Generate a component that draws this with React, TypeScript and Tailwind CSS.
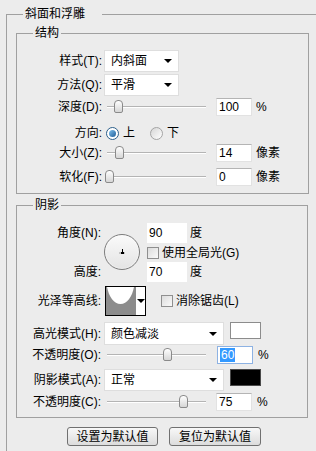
import type { ReactNode } from 'react';

// Photoshop 图层样式 - 斜面和浮雕 面板

function GroupBox({ title, className, titleClass, children }: { title: string; className: string; titleClass?: string; children: ReactNode }) {
  return (
    <div className={`relative border border-[#a0a0a0] ${className}`}>
      <span className={`absolute -top-[9px] bg-[#ececec] text-[12px] leading-[16px] ${titleClass ?? 'left-[16px] px-[2px]'}`}>{title}</span>
      {children}
    </div>
  );
}

function Arrow() {
  return <span className="h-0 w-0 border-l-[4px] border-r-[4px] border-t-[4px] border-l-transparent border-r-transparent border-t-black" />;
}

function Dropdown({ value, width }: { value: string; width: string }) {
  return (
    <div className={`flex h-[22px] items-center justify-between border border-[#dedede] bg-white pl-[6px] pr-[6px] ${width}`}>
      <span>{value}</span>
      <Arrow />
    </div>
  );
}

function NumInput({ value, selected }: { value: string; selected?: boolean }) {
  return (
    <div
      className={`flex h-[18px] w-[36px] items-center border bg-white pl-[2px] text-[12px] leading-[14px] ${
        selected ? 'border-[#8db2e3]' : 'border-[#e2e2e2] border-t-[#b4b4b4]'
      }`}
    >
      {selected ? <span className="bg-[#3399ff] px-[1px] text-white">{value}</span> : value}
    </div>
  );
}

function Slider({ thumb }: { thumb: number }) {
  // thumb: 滑块中心 x（相对于滑杆容器）
  return (
    <div className="relative h-[14px] w-[102px]">
      <div className="absolute left-[3px] right-0 top-[6px] h-[2px] border-b border-b-white bg-[#b4b4b4]" />
      <div
        className="absolute top-0 h-[13px] w-[9px] rounded-t-[4px] rounded-b-[2px] border border-[#8a8a8a] bg-gradient-to-b from-white to-[#d6d6d6]"
        style={{ left: `${thumb - 4}px` }}
      />
    </div>
  );
}

function Checkbox() {
  return <span className="block h-[12px] w-[12px] border border-[#8f8f8f] bg-gradient-to-br from-[#dcdcdc] to-[#fafafa]" />;
}

function Radio({ checked }: { checked?: boolean }) {
  return checked ? (
    <span className="flex h-[13px] w-[13px] items-center justify-center rounded-full border border-[#2c5f8a] bg-white">
      <span className="h-[7px] w-[7px] rounded-full bg-gradient-to-br from-[#7fc0ee] to-[#1f5f98]" />
    </span>
  ) : (
    <span className="block h-[13px] w-[13px] rounded-full border border-[#a4a4a4] bg-gradient-to-br from-[#d6d6d6] to-white" />
  );
}

function Label({ children, w = 'w-[85px]' }: { children: ReactNode; w?: string }) {
  return <div className={`${w} shrink-0 text-right`}>{children}</div>;
}

function SliderRow({ label, thumb, value, unit, className, selected }: { label: string; thumb: number; value: string; unit: string; className?: string; selected?: boolean }) {
  return (
    <div className={`flex h-[20px] items-center ${className ?? ''}`}>
      <Label>{label}</Label>
      <div className="ml-[2px]">
        <Slider thumb={thumb} />
      </div>
      <div className="ml-[10px]">
        <NumInput value={value} selected={selected} />
      </div>
      <span className="ml-[4px]">{unit}</span>
    </div>
  );
}

export default function App() {
  return (
    <div className="h-[451px] w-[316px] overflow-hidden bg-[#ececec] font-['Liberation_Sans','Noto_Sans_CJK_SC',sans-serif] text-[12px] leading-[16px] text-black">
      <div className="pl-[6px] pt-[14px]">
        <div className="relative h-[450px] w-[330px] border-l border-t border-[#a0a0a0]">
          <span className="absolute -top-[9px] left-[16px] bg-[#ececec] pl-[2px] pr-[17px] text-[12px] leading-[16px]">斜面和浮雕</span>

          <div className="pl-[9px] pt-[18px]">
            {/* 结构 */}
            <GroupBox title="结构" className="h-[161px] w-[293px]">
              <div className="mt-[17px] flex h-[20px] items-center">
                <Label>样式(T):</Label>
                <div className="ml-[2px]">
                  <Dropdown value="内斜面" width="w-[75px]" />
                </div>
              </div>
              <div className="mt-[4px] flex h-[20px] items-center">
                <Label>方法(Q):</Label>
                <div className="ml-[2px]">
                  <Dropdown value="平滑" width="w-[75px]" />
                </div>
              </div>
              <SliderRow label="深度(D):" thumb={14} value="100" unit="%" className="mt-[2px]" />
              <div className="mt-[6px] flex h-[20px] items-center">
                <Label>方向:</Label>
                <div className="ml-[4px] flex items-center">
                  <Radio checked />
                  <span className="ml-[4px]">上</span>
                  <span className="ml-[15px]">
                    <Radio />
                  </span>
                  <span className="ml-[4px]">下</span>
                </div>
              </div>
              <SliderRow label="大小(Z):" thumb={15} value="14" unit="像素" />
              <SliderRow label="软化(F):" thumb={5} value="0" unit="像素" className="mt-[4px]" />
            </GroupBox>

            {/* 阴影 */}
            <GroupBox title="阴影" className="mt-[11px] h-[213px] w-[292px]">
              <div className="mt-[17px] flex">
                <div className="flex w-[84px] shrink-0 flex-col text-right">
                  <div className="flex h-[20px] items-center justify-end">角度(N):</div>
                  <div className="mt-[19px] flex h-[20px] items-center justify-end">高度:</div>
                </div>
                <div className="ml-[3px] mt-[11px] h-[36px] w-[36px] rounded-full border border-[#7c7c7c] bg-gradient-to-b from-[#fafafa] to-[#e4e4e4] shadow-[inset_0_0_2px_#fff]">
                  <svg width="34" height="34" viewBox="0 0 34 34">
                    <line x1="14" y1="18" x2="20" y2="18" stroke="#9a9a9a" strokeWidth="1" />
                    <line x1="17.5" y1="14" x2="17.5" y2="17" stroke="#000" strokeWidth="1" />
                    <rect x="16" y="17" width="3" height="2" fill="#000" />
                  </svg>
                </div>
                <div className="ml-[7px] flex flex-col">
                  <div className="flex h-[20px] items-center">
                    <div className="flex h-[20px] w-[40px] items-center bg-white pl-[2px]">90</div>
                    <span className="ml-[3px]">度</span>
                  </div>
                  <div className="flex h-[19px] items-center">
                    <Checkbox />
                    <span className="ml-[3px]">使用全局光(G)</span>
                  </div>
                  <div className="flex h-[20px] items-center">
                    <div className="flex h-[20px] w-[40px] items-center bg-white pl-[2px]">70</div>
                    <span className="ml-[3px]">度</span>
                  </div>
                </div>
              </div>

              <div className="mt-[4px] flex h-[30px] items-center">
                <Label w="w-[84px]">光泽等高线:</Label>
                <div className="ml-[4px] flex h-[30px] w-[41px] border border-black bg-white">
                  <svg width="29" height="28" viewBox="0 0 29 28" className="shrink-0">
                    <rect x="0" y="0" width="29" height="28" fill="#8c8c8c" />
                    <path d="M1,0 C3,10 8,17 14.5,17 C21,17 26,10 28,0 Z" fill="#fff" />
                  </svg>
                  <div className="flex flex-1 items-center justify-center border-l border-[#8c8c8c]">
                    <Arrow />
                  </div>
                </div>
                <div className="ml-[15px] flex items-center">
                  <Checkbox />
                  <span className="ml-[3px]">消除锯齿(L)</span>
                </div>
              </div>

              <div className="mt-[6px] flex items-start">
                <div className="flex h-[23px] items-center">
                  <Label w="w-[84px]">高光模式(H):</Label>
                </div>
                <div className="ml-[3px] h-[23px]">
                  <Dropdown value="颜色减淡" width="w-[120px] h-[23px]" />
                </div>
                <div className="ml-[6px] h-[17px] w-[31px] border border-[#8c8c8c] bg-white" />
              </div>
              <div className="flex h-[19px] items-center">
                <Label w="w-[84px]">不透明度(O):</Label>
                <div className="ml-[3px]">
                  <Slider thumb={63} />
                </div>
                <div className="ml-[11px]">
                  <NumInput value="60" selected />
                </div>
                <span className="ml-[5px]">%</span>
              </div>

              <div className="mt-[5px] flex items-start">
                <div className="flex h-[22px] items-center">
                  <Label w="w-[84px]">阴影模式(A):</Label>
                </div>
                <div className="ml-[3px]">
                  <Dropdown value="正常" width="w-[120px]" />
                </div>
                <div className="ml-[6px] h-[17px] w-[31px] border border-[#4a4a4a] bg-black" />
              </div>
              <div className="mt-[2px] flex h-[18px] items-center">
                <Label w="w-[84px]">不透明度(C):</Label>
                <div className="ml-[3px]">
                  <Slider thumb={79} />
                </div>
                <div className="ml-[10px]">
                  <NumInput value="75" />
                </div>
                <span className="ml-[5px]">%</span>
              </div>
            </GroupBox>

            <div className="mt-[9px] flex gap-[11px] pl-[51px]">
              <button className="flex h-[19px] w-[91px] items-center justify-center rounded-[3px] border border-[#707070] bg-gradient-to-b from-[#f8f8f8] to-[#dcdcdc] text-[12px] leading-[16px]">
                设置为默认值
              </button>
              <button className="flex h-[19px] w-[92px] items-center justify-center rounded-[3px] border border-[#707070] bg-gradient-to-b from-[#f8f8f8] to-[#dcdcdc] text-[12px] leading-[16px]">
                复位为默认值
              </button>
            </div>
          </div>
        </div>
      </div>
    </div>
  );
}
